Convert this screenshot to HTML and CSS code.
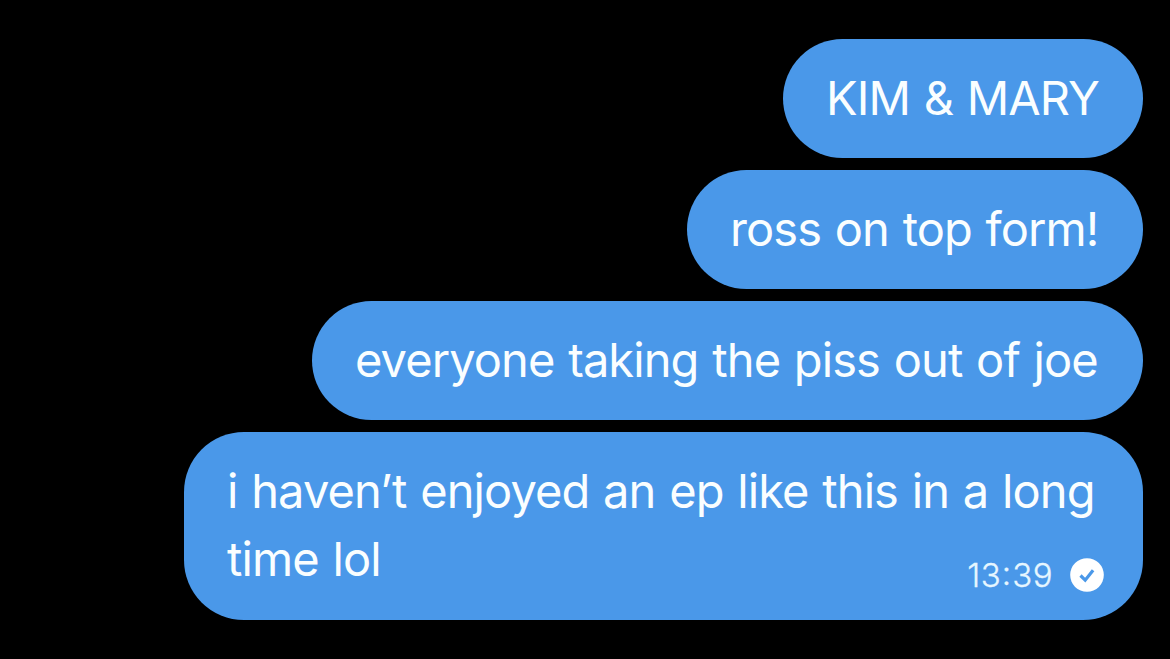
FILE: index.html
```html
<!DOCTYPE html>
<html lang="en">
<head>
<meta charset="utf-8">
<title>Messages</title>
<link rel="stylesheet" href="styles.css">
</head>
<body>
<main class="thread">
  <div class="bubble kim"><span class="text">KIM &amp; MARY</span></div>
  <div class="bubble ross"><span class="text">ross on top form!</span></div>
  <div class="bubble joe"><span class="text">everyone taking the piss out of joe</span></div>
  <div class="bubble long">
    <span class="text line-one">i haven’t enjoyed an ep like this in a long</span>
    <div class="last-row">
      <span class="text line-two">time lol</span>
      <span class="meta">
        <time class="time">13<span class="colon">:</span>39</time>
        <svg class="check" viewBox="0 0 34 34" aria-label="Sent"><circle cx="17" cy="17" r="16.8" fill="#fff"/><path d="M10.5 17.5l4.7 4.7 7.9-10" fill="none" stroke="#4a98e9" stroke-width="3.2"/></svg>
      </span>
    </div>
  </div>
</main>
</body>
</html>
```
FILE: styles.css
```css
* { box-sizing: border-box; }
body { margin: 0; background: #000; }
.thread {
  width: 1170px;
  height: 659px;
  padding: 39px 27px 0 0;
  display: flex;
  flex-direction: column;
  align-items: flex-end;
  gap: 12.5px;
  overflow: hidden;
  font-family: Inter, sans-serif;
  color: #fafeff;
}
.bubble {
  height: 118.5px;
  padding: 0 44px 1px 43px;
  border-radius: 60px;
  background: #4a98e9;
  display: flex;
  align-items: center;
}
.text {
  font-size: 47px;
  font-weight: 400;
  line-height: 68px;
  letter-spacing: -0.9px;
  word-spacing: 1.4px;
  white-space: nowrap;
}
.kim { width: 360px; }
.ross { width: 456px; }
.joe { width: 831px; }
.long {
  width: 959px;
  height: 187.5px;
  padding-top: 25px;
  flex-direction: column;
  align-items: stretch;
}
.last-row { display: flex; justify-content: space-between; }
.meta {
  display: flex;
  align-items: center;
  gap: 17px;
  height: 34px;
  margin: 33px -5px 0 0;
}
.time {
  font-size: 33px;
  font-weight: 300;
  line-height: 34px;
  color: #e6f6ff;
  letter-spacing: 0.5px;
  -webkit-text-stroke: 0.3px #e6f6ff;
}
.colon { position: relative; top: -2px; padding: 0 0.5px; }
.check { width: 34px; height: 34px; }
```
